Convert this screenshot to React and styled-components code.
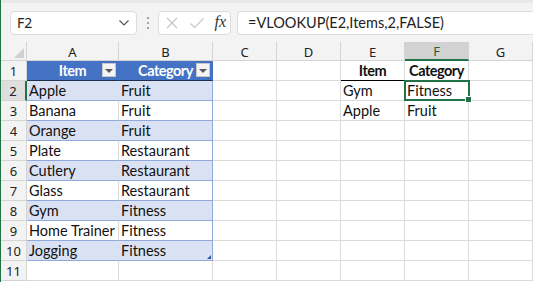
import React from 'react';
import styled, {createGlobalStyle} from 'styled-components';

const GlobalStyle = createGlobalStyle`
    html, body {
        margin:0;
        padding:0;
        background:#fff;
    }
`;

const Window = styled.div`
    width:533px;
    height:282px;
    overflow:hidden;
    border-left:1px solid #217346;
    box-sizing:border-box;
    background:#fff;
`;

const Toolbar = styled.div`
    height:42px;
    box-sizing:border-box;
    background:#f3f3f3;
    border-top:3px solid #e9e9e9;
    display:flex;
    align-items:center;
    padding:0 0 0 9px;
    font-family:"Noto Sans", "Open Sans", sans-serif;
`;

const NameBox = styled.div`
    width:127px;
    height:24px;
    box-sizing:border-box;
    background:#fff;
    border:1px solid #dcdcdc;
    border-radius:4px;
    display:flex;
    align-items:center;
    justify-content:space-between;
    padding:0 6px 0 6px;
    font-size:14px;
    color:#222;
`;

const Dots = styled.div`
    width:21px;
    display:flex;
    flex-direction:column;
    align-items:center;
    gap:3px;
    span {
        width:2px;
        height:2px;
        background:#8a8a8a;
        border-radius:1px;
    }
`;

const Buttons = styled.div`
    width:73px;
    height:24px;
    box-sizing:border-box;
    background:#fff;
    border:1px solid #dcdcdc;
    border-radius:4px;
    display:flex;
    align-items:center;
    justify-content:space-between;
    padding:0 4px 0 6px;
`;

const Fx = styled.span`
    font-family:"Liberation Serif", serif;
    font-style:italic;
    font-size:16px;
    color:#333;
    margin-top:-2px;
`;

const Formula = styled.div`
    flex:1;
    margin-left:6px;
    height:24px;
    box-sizing:border-box;
    background:#fff;
    border:1px solid #dcdcdc;
    border-right:none;
    border-radius:4px 0 0 4px;
    display:flex;
    align-items:center;
    padding-left:10px;
    font-family:Lato, "Noto Sans", sans-serif;
    font-size:14.5px;
    color:#222;
`;

const Sheet = styled.div`
    display:grid;
    grid-template-columns:26px 92px 94px repeat(5, 64px);
    grid-template-rows:19px;
    grid-auto-rows:20px;
    font-family:Lato, "Liberation Sans", sans-serif;
    font-size:14.5px;
`;

const ColHead = styled.div`
    box-sizing:border-box;
    background:${p => p.$active ? '#d2d2d2' : '#f3f3f3'};
    border-right:1px solid #d4d4d4;
    border-bottom:${p => p.$active ? '2px solid #217346' : '1px solid #d4d4d4'};
    display:flex;
    align-items:center;
    justify-content:center;
    font-family:"Noto Sans", "Open Sans", sans-serif;
    font-size:13px;
    color:${p => p.$active ? '#1d5e38' : '#222'};
    padding-top:1px;
`;

const Corner = styled.div`
    box-sizing:border-box;
    background:#f3f3f3;
    border-right:1px solid #d4d4d4;
    border-bottom:1px solid #d4d4d4;
    display:flex;
    align-items:flex-end;
    justify-content:flex-end;
    padding:0 2px 2px 0;
`;

const RowHead = styled.div`
    box-sizing:border-box;
    background:${p => p.$active ? '#dedede' : '#f3f3f3'};
    border-right:${p => p.$active ? '2px solid #217346' : '1px solid #d4d4d4'};
    border-bottom:1px solid #d4d4d4;
    display:flex;
    align-items:center;
    justify-content:center;
    font-family:"Noto Sans", "Open Sans", sans-serif;
    font-size:13px;
    color:#222;
`;

const Cell = styled.div`
    position:relative;
    box-sizing:border-box;
    background:${p => p.$bg || '#fff'};
    border-right:1px solid ${p => p.$right || '#dadada'};
    border-bottom:1px solid ${p => p.$bottom || '#dadada'};
    display:flex;
    align-items:flex-end;
    justify-content:${p => p.$center ? 'center' : 'flex-start'};
    padding:0 2px 1px 2px;
    font-weight:${p => p.$bold ? 700 : 400};
    letter-spacing:${p => p.$bold ? '-0.5px' : '0'};
    color:${p => p.$color || '#111'};
    white-space:nowrap;
`;

const FilterButton = styled.div`
    position:absolute;
    right:2px;
    top:2px;
    width:14px;
    height:14px;
    box-sizing:border-box;
    background:#f4f4f4;
    border:1px solid #c8c8c8;
    display:flex;
    align-items:center;
    justify-content:center;
    &::after {
        content:'';
        border-left:4px solid transparent;
        border-right:4px solid transparent;
        border-top:4px solid #595959;
        margin-top:1px;
    }
`;

const ResizeMark = styled.div`
    position:absolute;
    right:1px;
    bottom:1px;
    width:0;
    height:0;
    border-left:4px solid transparent;
    border-bottom:4px solid #2f5597;
`;

const Selection = styled.div`
    position:absolute;
    left:-1px;
    top:-1px;
    right:-2px;
    bottom:-1px;
    border:2px solid #217346;
    z-index:2;
    &::after {
        content:'';
        position:absolute;
        right:-4px;
        bottom:-4px;
        width:5px;
        height:5px;
        background:#217346;
        border:1px solid #fff;
    }
`;

const columns = ['A', 'B', 'C', 'D', 'E', 'F', 'G'];

const table = [
    ['Apple', 'Fruit'],
    ['Banana', 'Fruit'],
    ['Orange', 'Fruit'],
    ['Plate', 'Restaurant'],
    ['Cutlery', 'Restaurant'],
    ['Glass', 'Restaurant'],
    ['Gym', 'Fitness'],
    ['Home Trainer', 'Fitness'],
    ['Jogging', 'Fitness'],
];

const lookup = {
    1: ['Item', 'Category'],
    2: ['Gym', 'Fitness'],
    3: ['Apple', 'Fruit'],
};

function renderRow(r) {
    const cells = [];
    cells.push(<RowHead key="h" $active={r === 2}>{r}</RowHead>);

    /* table A:B */
    if (r === 1) {
        cells.push(
            <Cell key="A" $bg="#4472c4" $right="#4472c4" $bottom="#1f2f4f" $bold $color="#fff" $center>
                Item
                <FilterButton />
            </Cell>
        );
        cells.push(
            <Cell key="B" $bg="#4472c4" $right="#4472c4" $bottom="#1f2f4f" $bold $color="#fff" $center>
                Category
                <FilterButton />
            </Cell>
        );
    } else if (r <= 10) {
        const banded = r % 2 === 0;
        const bg = banded ? '#d9e1f2' : '#fff';
        const [item, cat] = table[r - 2];
        cells.push(<Cell key="A" $bg={bg} $right={banded ? '#d9e1f2' : '#dadada'} $bottom="#8ea9db">{item}</Cell>);
        cells.push(
            <Cell key="B" $bg={bg} $right="#8ea9db" $bottom="#8ea9db">
                {cat}
                {r === 10 && <ResizeMark />}
            </Cell>
        );
    } else {
        cells.push(<Cell key="A" />);
        cells.push(<Cell key="B" />);
    }

    cells.push(<Cell key="C" />);
    cells.push(<Cell key="D" />);

    const row = lookup[r];
    if (row) {
        const head = r === 1;
        cells.push(<Cell key="E" $bold={head} $center={head} $bottom={head ? '#000' : undefined}>{row[0]}</Cell>);
        cells.push(
            <Cell key="F" $bold={head} $center={head} $bottom={head ? '#000' : undefined}>
                {row[1]}
                {r === 2 && <Selection />}
            </Cell>
        );
    } else {
        cells.push(<Cell key="E" />);
        cells.push(<Cell key="F" />);
    }
    cells.push(<Cell key="G" />);
    return cells;
}

export default function App() {
    const rows = [];
    for (let r = 1; r <= 11; r++) rows.push(...renderRow(r));

    return (
        <>
            <GlobalStyle />
            <Window>
                <Toolbar>
                    <NameBox>
                        <span>F2</span>
                        <svg width="12" height="8" viewBox="0 0 12 8">
                            <polyline points="1.5,1.5 6,6 10.5,1.5" fill="none" stroke="#555" strokeWidth="1.2" />
                        </svg>
                    </NameBox>
                    <Dots><span /><span /><span /></Dots>
                    <Buttons>
                        <svg width="14" height="14" viewBox="0 0 14 14">
                            <path d="M2 2 L12 12 M12 2 L2 12" stroke="#c4c4c4" strokeWidth="1.1" fill="none" />
                        </svg>
                        <svg width="16" height="14" viewBox="0 0 16 14">
                            <polyline points="1.5,7.5 5.5,11.5 14.5,2.5" stroke="#c4c4c4" strokeWidth="1.1" fill="none" />
                        </svg>
                        <Fx>fx</Fx>
                    </Buttons>
                    <Formula>=VLOOKUP(E2,Items,2,FALSE)</Formula>
                </Toolbar>
                <Sheet>
                    <Corner>
                        <svg width="10" height="10" viewBox="0 0 10 10">
                            <polygon points="10,0 10,10 0,10" fill="#d0d0d0" />
                        </svg>
                    </Corner>
                    {columns.map(c => (
                        <ColHead key={c} $active={c === 'F'}>{c}</ColHead>
                    ))}
                    {rows}
                </Sheet>
            </Window>
        </>
    );
}
